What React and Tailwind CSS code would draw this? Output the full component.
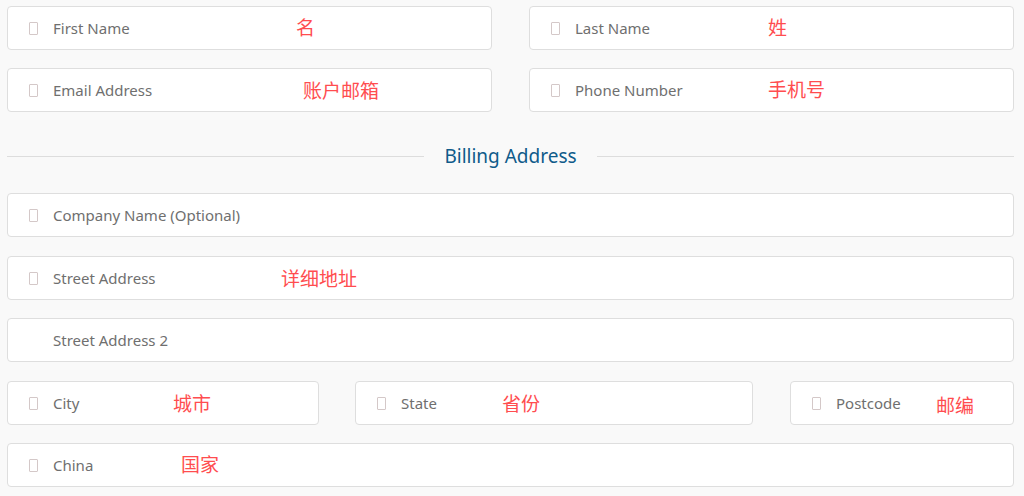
import React from "react";

function Tofu() {
  return <span className="inline-block w-[9px] h-[13px] border border-[#d4c8c8] rounded-[1px]" />;
}

function Field({ label, note, noteLeft, icon = true, className = "" }) {
  return (
    <div className={`relative flex items-center h-[44px] bg-white border border-[#dedede] rounded-[4px] pl-[21px] ${className}`}>
      <span className="w-[9px] flex">{icon && <Tofu />}</span>
      <span className="ml-[15px] text-[15px] text-[#6f6f6f] mt-[1px]">{label}</span>
      {note && (
        <span
          className={`absolute text-[19px] leading-none text-[#ff4d4f] font-['Noto_Sans_CJK_SC',sans-serif] ${noteLeft}`}
        >
          {note}
        </span>
      )}
    </div>
  );
}

export default function App() {
  return (
    <div className="w-[1024px] h-[496px] bg-[#f9f9f9] pl-[7px] pr-[10px] pt-[6px] font-['Noto_Sans','Noto_Sans_CJK_SC',sans-serif] overflow-hidden">
      <div className="flex gap-[37px]">
        <Field className="w-[485px]" label="First Name" note="名" noteLeft="left-[288px] top-[10px]" />
        <Field className="flex-1" label="Last Name" note="姓" noteLeft="left-[238px] top-[10px]" />
      </div>
      <div className="flex gap-[37px] mt-[18px]">
        <Field className="w-[485px]" label="Email Address" note="账户邮箱" noteLeft="left-[295px] top-[11px]" />
        <Field className="flex-1" label="Phone Number" note="手机号" noteLeft="left-[238px] top-[10px]" />
      </div>

      {/* Billing Address */}
      <div className="flex items-center gap-[20px] h-[44px] mt-[22px]">
        <div className="flex-1 h-px bg-[#dddddd]" />
        <h2 className="text-[19px] text-[#0f5b8a] leading-none">Billing Address</h2>
        <div className="flex-1 h-px bg-[#dddddd]" />
      </div>

      <Field className="mt-[15px]" label="Company Name (Optional)" />
      <Field className="mt-[19px]" label="Street Address" note="详细地址" noteLeft="left-[273px] top-[11px]" />
      <Field className="mt-[18px]" label="Street Address 2" icon={false} />

      <div className="flex mt-[19px]">
        <Field className="w-[312px]" label="City" note="城市" noteLeft="left-[165px] top-[11px]" />
        <Field className="w-[398px] ml-[36px]" label="State" note="省份" noteLeft="left-[146px] top-[11px]" />
        <Field className="flex-1 ml-[37px]" label="Postcode" note="邮编" noteLeft="left-[145px] top-[13px]" />
      </div>
      <Field className="mt-[18px]" label="China" note="国家" noteLeft="left-[173px] top-[10px]" />
    </div>
  );
}
